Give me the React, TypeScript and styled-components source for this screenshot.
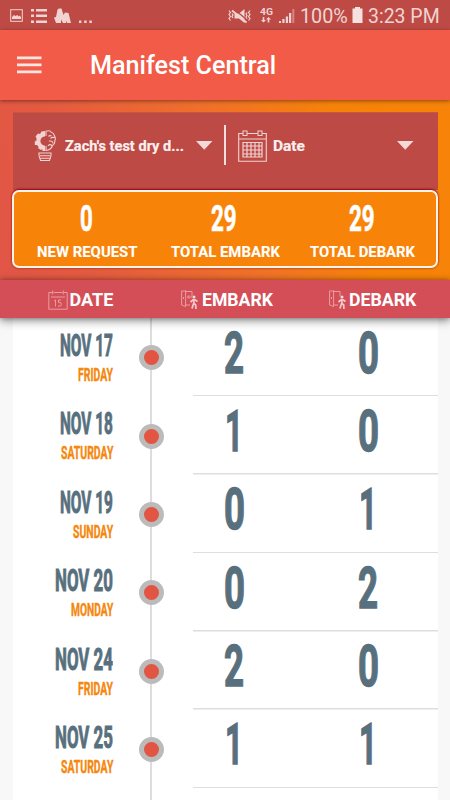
import React, { useLayoutEffect, useRef, useState } from "react";
import styled, { createGlobalStyle } from "styled-components";

const GlobalStyle = createGlobalStyle`
  * { box-sizing: border-box; }
  body { margin: 0; background: #f8f8f8; overflow: hidden; }
  svg { display: block; flex: none; }
`;

const Screen = styled.div`
  width: 450px;
  height: 800px;
  overflow: hidden;
  display: flex;
  flex-direction: column;
  background: #f8f8f8;
  font-family: Roboto, sans-serif;
  color: #fff;
`;

/* Text squeezed or stretched horizontally to an exact width */
const FitBox = styled.span<{ $w: number; $size: number; $line: number; $weight: number; $color: string; $stroke: number }>`
  display: block;
  flex: none;
  width: ${(p) => p.$w}px;
  height: ${(p) => p.$line}px;
  line-height: ${(p) => p.$line}px;
  font-size: ${(p) => p.$size}px;
  font-weight: ${(p) => p.$weight};
  color: ${(p) => p.$color};
  -webkit-text-stroke: ${(p) => p.$stroke}px ${(p) => p.$color};
`;
const FitInner = styled.span`
  display: inline-block;
  white-space: pre;
  transform-origin: 0 50%;
`;

type FitProps = { text: string; w: number; size: number; line: number; weight?: number; color?: string; stroke?: number };

function Fit({ text, w, size, line, weight = 700, color = "#fff", stroke = 0 }: FitProps) {
  const ref = useRef<HTMLSpanElement>(null);
  const [scale, setScale] = useState(1);
  useLayoutEffect(() => {
    if (ref.current) setScale(w / ref.current.offsetWidth);
  }, [text, w, size, weight]);
  return (
    <FitBox $w={w} $size={size} $line={line} $weight={weight} $color={color} $stroke={stroke}>
      <FitInner ref={ref} style={{ transform: `scaleX(${scale})` }}>{text}</FitInner>
    </FitBox>
  );
}

const StatusBar = styled.header`
  height: 30px;
  flex: none;
  background: #be4a45;
  display: flex;
  justify-content: space-between;
  padding: 1px 10px 0;
`;
const StatusGroup = styled.div<{ $gap: number }>`
  display: flex;
  align-items: center;
  gap: ${(p) => p.$gap}px;
`;

const AppBar = styled.div`
  height: 70px;
  flex: none;
  z-index: 3;
  background: #f15b47;
  display: flex;
  align-items: center;
  padding-left: 17px;
  gap: 48px;
  box-shadow: 0 1px 4px rgba(0, 0, 0, 0.45);
`;
const Title = styled.div`
  padding-top: 2px;
`;

const Hero = styled.section`
  height: 180px;
  flex: none;
  padding: 12px 12px 0;
  background: linear-gradient(75deg, #e05546 0%, #e45b40 20%, #f0702a 51%, #f68209 76%, #f78408 100%);
`;
const Filters = styled.div`
  height: 78px;
  margin: 0 0.5px;
  background: #bd4a45;
  border-top: 1px solid #c9543f;
  display: grid;
  grid-template-columns: 211px 2px 1fr;
  padding-bottom: 12px;
  align-items: center;
`;
const Filter = styled.div<{ $left: number; $gap: number; $right: number }>`
  display: flex;
  align-items: center;
  gap: ${(p) => p.$gap}px;
  padding: 0 ${(p) => p.$right}px 0 ${(p) => p.$left}px;
  & > :last-child { margin-left: auto; }
`;
const Divider = styled.div`
  height: 40px;
  margin-top: -1px;
  background: #f2dedd;
`;
const Summary = styled.div`
  height: 78px;
  border: 2px solid #fff3ec;
  border-radius: 7px;
  background: #f78409;
  box-shadow: 0 -1px 2px #99000f, 0 1px 2px rgba(150, 50, 0, 0.4);
  display: grid;
  grid-template-columns: 147px 128px 147px;
  padding-top: 9px;
`;
const Total = styled.div`
  display: flex;
  flex-direction: column;
  align-items: center;
`;
const TotalValue = styled.div`
  margin-right: 2px;
`;

const Heading = styled.div`
  height: 38px;
  flex: none;
  z-index: 2;
  background: #d44e58;
  box-shadow: 0 0 5px rgba(0, 0, 0, 0.3), 0 3px 9px rgba(0, 0, 0, 0.4);
  display: grid;
  grid-template-columns: 181px 148px 1fr;
  align-items: center;
  padding-top: 2px;
`;
const HeadCell = styled.div<{ $left: number; $gap: number }>`
  display: flex;
  align-items: center;
  padding-left: ${(p) => p.$left}px;
  gap: ${(p) => p.$gap}px;
`;

const List = styled.main`
  flex: 1;
  margin: 0 12.5px;
  background: #fff;
`;
const Row = styled.div<{ $height: number }>`
  height: ${(p) => p.$height}px;
  display: grid;
  grid-template-columns: 100.5px 75px 1fr;
`;
const DateCell = styled.div`
  display: flex;
  flex-direction: column;
  align-items: flex-end;
  padding-top: 14px;
  gap: 2px;
`;
const Rail = styled.div`
  grid-column: 2;
  display: flex;
  align-items: center;
  justify-content: center;
  background: linear-gradient(#ddd, #ddd) 37px 0 / 2px 100% no-repeat;
`;
const Dot = styled.div`
  width: 25px;
  height: 25px;
  margin: 1px 0 0 1px;
  border: 5px solid #bbb;
  border-radius: 50%;
  background: #e15542;
`;
const Counts = styled.div`
  margin-left: 5px;
  display: grid;
  grid-template-columns: 82px 1fr;
  background: linear-gradient(#dedede, #dedede) 0 100% / 100% 1.5px no-repeat;
`;
const Count = styled.div<{ $shift: number }>`
  display: flex;
  justify-content: center;
  width: 60px;
  margin-left: ${(p) => p.$shift}px;
  padding-top: 10.5px;
`;

const PALE = "#f1d3d1";

const PictureIcon = () => (
  <svg width="13" height="13" viewBox="0 0 13 13" fill="none" stroke={PALE}>
    <rect x=".7" y=".7" width="11.6" height="11.6" />
    <path d="M2 10V8l2-2 1.500 1 2-1 1 1.500 1-1L11 8v2Z" fill={PALE} stroke="none" />
  </svg>
);
const ListIcon = () => (
  <svg width="16" height="16" viewBox="0 0 16 16" fill={PALE}>
    <path d="M0 1h3v2.500H0zM5 1h11v2.500H5zM0 6.600h3v2.500H0zM5 6.600h11v2.500H5zM0 12.400h3v2.500H0zM5 12.400h11v2.500H5z" />
  </svg>
);
const PeaksIcon = () => (
  <svg width="17" height="16" viewBox="0 0 17 16" fill={PALE}>
    <path d="M0 9.500L2 9 3.500 1.500 5 .5h2.500L9.500 7l1.500-2.500 3.500.5L17 15h-4l-1-2.500V15H9L7 11.500V15H2Z" />
  </svg>
);
const DotsIcon = () => (
  <svg width="13" height="16" viewBox="0 0 13 16" fill={PALE}>
    <path d="M0 12.500h2.400V15H0zM5.200 12.500h2.400V15H5.200zM10.400 12.500h2.400V15h-2.400z" />
  </svg>
);
const MuteIcon = () => (
  <svg width="23" height="16" viewBox="0 0 23 16" fill="none" stroke={PALE} strokeWidth="1.200">
    <path d="M1 2.500l1.500 2L1 6.500l1.500 2-1.500 2 1.500 2M4 5.500l1 1.500-1 1.500L5 10M22 2.500l-1.500 2 1.500 2-1.500 2 1.500 2-1.500 2M19 4.500L18 6l1 1.500L18 9l1 2" />
    <path d="M6.500 5.500H11L16.500 1v14L11 10.500H6.500Z" fill={PALE} stroke="none" />
    <path d="M6.500 1.500l12 10" stroke="#be4a45" strokeWidth="1.300" />
    <path d="M4 2.500l14.500 12" strokeWidth="1.800" />
  </svg>
);
const Network = styled.div`
  display: flex;
  flex-direction: column;
  align-items: center;
  gap: 1px;
  margin: 0 1px 0 4px;
`;
const NetArrows = () => (
  <svg width="10" height="6" viewBox="0 0 10 6" fill={PALE}>
    <path d="M1.700 0h1.600v3H5L2.500 5.600 0 3h1.700zM6.700 5.600h1.600v-3H10L7.500 0 5 2.600h1.700z" />
  </svg>
);
const SignalIcon = () => (
  <svg width="16" height="16" viewBox="0 0 16 16" fill={PALE}>
    <path d="M0 13h2v2H0zM3.300 11h2.200v4H3.300zM6.800 8.500H9V15H6.800zM10 5h2.200v10H10z" />
    <path d="M13.300 1H15.300v14H13.300z" opacity=".45" />
  </svg>
);
const BatteryIcon = () => (
  <svg width="11" height="17" viewBox="0 0 11 17" fill="#f6e1e0">
    <path d="M3 0h5v1.500h2.500V16H.5V1.500H3Z" />
  </svg>
);
const MenuIcon = () => (
  <svg width="25" height="18" viewBox="0 0 25 18" fill="#fde6e3">
    <path d="M0 .5h24.500V3.200H0zM0 7.500h24.500v2.700H0zM0 14.500h24.500v2.700H0z" />
  </svg>
);
const BulbIcon = () => (
  <svg width="22" height="32" viewBox="0 0 22 32" fill="none" stroke={PALE}>
    <path d="M11 1v5.500a4.600 4.600 0 0 0 0 9.200V21H8.500v-1.500l-2 .3-2.300-1.500.3-1.600L3 15H.8v-3.500l1.700-1V8L1.500 6.500 4 3.500l2 .5L7.500 1.500Z" fill={PALE} stroke="none" />
    <path d="M12 6V1.200q4-1.200 5.500 1.300Q20 3 20.300 5.500 22 8 20.800 10.500q.5 3.500-2.300 5Q17 20 12 20.500V16M14.500 6.500q1-1.500 3-.5M20.500 7.500q-3-.5-4 1M15 11q4-.5 4 2.500M14 16q1.500-2.500 4-.5" strokeWidth="1.100" />
    <path d="M5 23h12v2.500l-1.500 5h-9L5 25.500ZM6 25.800h10M6.500 28.300h9" strokeWidth="1.100" />
  </svg>
);
const CalendarIcon = () => (
  <svg width="29" height="32" viewBox="0 0 29 32" fill="none" stroke={PALE}>
    <path d="M5 3.500H.7v27.700h27.600V3.500H24M9 3.500h11M.7 9h27.600" strokeWidth="1.100" />
    <rect x="5" y="1" width="4" height="4.500" />
    <rect x="20" y="1" width="4" height="4.500" />
    <path d="M5 12.500h19V27H5ZM9 12.500V27M13 12.500V27M17 12.500V27M21 12.500V27M5 16h19M5 20h19M5 24h19" strokeWidth="1.200" />
  </svg>
);
const Caret = () => (
  <svg width="17" height="9" viewBox="0 0 17 9"><path d="M0 0h16.500L8.250 8.700Z" fill="#f3dad8" /></svg>
);
const LINE = "#eeb1b3";
const SmallCalendar = () => (
  <svg width="20" height="20" viewBox="0 0 20 20" fill="none" stroke={LINE} strokeWidth=".8">
    <path d="M4 2.500H.8v16.700h18.400V2.500H16M5.500 2.500h9M3 7h14M4.700.5v4M15.300.5v4M6 11l1.500-1v6.500M13 10h-2.500v2.500q3-.5 3 1.700 0 2.300-3.500 2" />
  </svg>
);
const DoorIcon = ({ inward }: { inward?: boolean }) => (
  <svg width="18" height="20" viewBox="0 0 18 20" fill="none" stroke={LINE} strokeWidth=".8">
    <path d="M.6 1h3l1-.5v16l-4-1.500ZM4.500 1.500H11v5M4.500 15H9M2.500 7v2" />
    {inward && <path d="M11 7H6.500M8.500 5l-2 2 2 2" />}
    <circle cx="13" cy="7" r="1.500" fill="#f8dcdd" stroke="none" />
    <path d="M12.700 9l.3 4.500 1.700 1.500.2 4M12.500 13.500l-1.500 5M12.500 9.500l-3 2.500M13.500 9.500l3 2" stroke="#f3c9cb" strokeWidth="1.700" />
  </svg>
);

const INK = "#58707d";
const digitWidth: Record<string, number> = { "0": 21, "1": 18, "2": 20 };
const days = [
  { date: "NOV 17", dateW: 53, day: "FRIDAY", dayW: 35, embark: "2", debark: "0" },
  { date: "NOV 18", dateW: 53, day: "SATURDAY", dayW: 52.5, embark: "1", debark: "0" },
  { date: "NOV 19", dateW: 53, day: "SUNDAY", dayW: 40, embark: "0", debark: "1" },
  { date: "NOV 20", dateW: 58, day: "MONDAY", dayW: 42.5, embark: "0", debark: "2" },
  { date: "NOV 24", dateW: 58, day: "FRIDAY", dayW: 35, embark: "2", debark: "0" },
  { date: "NOV 25", dateW: 58, day: "SATURDAY", dayW: 52.5, embark: "1", debark: "1" },
];
const totals = [
  { value: "0", valueW: 13, label: "NEW REQUEST", labelW: 101 },
  { value: "29", valueW: 25.5, label: "TOTAL EMBARK", labelW: 108.5 },
  { value: "29", valueW: 25.5, label: "TOTAL DEBARK", labelW: 105 },
];

export default function App() {
  return (
    <>
      <GlobalStyle />
      <Screen>
        <StatusBar>
          <StatusGroup $gap={7.5}>
            <PictureIcon /><ListIcon /><PeaksIcon /><DotsIcon />
          </StatusGroup>
          <StatusGroup $gap={5}>
            <MuteIcon />
            <Network>
              <Fit text="4G" w={13} size={9.5} line={8} color={PALE} />
              <NetArrows />
            </Network>
            <SignalIcon />
            <Fit text="100%" w={47.5} size={20} line={30} weight={400} color="#f0d4d2" />
            <BatteryIcon />
            <Fit text="3:23 PM" w={72} size={20} line={30} weight={400} color="#f0d4d2" />
          </StatusGroup>
        </StatusBar>
        <AppBar>
          <MenuIcon />
          <Title><Fit text="Manifest Central" w={186} size={25} line={30} weight={500} /></Title>
        </AppBar>
        <Hero>
          <Filters>
            <Filter $left={21} $gap={9} $right={11}>
              <BulbIcon />
              <Fit text="Zach's test dry d..." w={118.5} size={15} line={20} color="#fbf0ef" stroke={0.2} />
              <Caret />
            </Filter>
            <Divider />
            <Filter $left={12} $gap={6} $right={24}>
              <CalendarIcon />
              <Fit text="Date" w={32} size={15} line={20} color="#fbf0ef" stroke={0.2} />
              <Caret />
            </Filter>
          </Filters>
          <Summary>
            {totals.map((t) => (
              <Total key={t.label}>
                <TotalValue><Fit text={t.value} w={t.valueW} size={36} line={37} stroke={0.6} /></TotalValue>
                <Fit text={t.label} w={t.labelW} size={15.5} line={29} stroke={0.1} />
              </Total>
            ))}
          </Summary>
        </Hero>
        <Heading>
          <HeadCell $left={48} $gap={1.5}>
            <SmallCalendar /><Fit text="DATE" w={44} size={18} line={24} />
          </HeadCell>
          <HeadCell $left={0} $gap={2.5}>
            <DoorIcon inward /><Fit text="EMBARK" w={70.5} size={18} line={24} />
          </HeadCell>
          <HeadCell $left={0} $gap={2}>
            <DoorIcon /><Fit text="DEBARK" w={67} size={18} line={24} />
          </HeadCell>
        </Heading>
        <List>
          {days.map((d) => (
            <Row key={d.date} $height={78.4}>
              <DateCell>
                <Fit text={d.date} w={d.dateW} size={30.5} line={28} color={INK} stroke={1} />
                <Fit text={d.day} w={d.dayW} size={18.5} line={26} color="#f5870c" stroke={0.4} />
              </DateCell>
              <Rail><Dot /></Rail>
              <Counts>
                <Count $shift={11}>
                  <Fit text={d.embark} w={digitWidth[d.embark]} size={57.5} line={50} color={INK} stroke={1.4} />
                </Count>
                <Count $shift={63}>
                  <Fit text={d.debark} w={digitWidth[d.debark]} size={57.5} line={50} color={INK} stroke={1.4} />
                </Count>
              </Counts>
            </Row>
          ))}
          <Row $height={11.6}><Rail /></Row>
        </List>
      </Screen>
    </>
  );
}
